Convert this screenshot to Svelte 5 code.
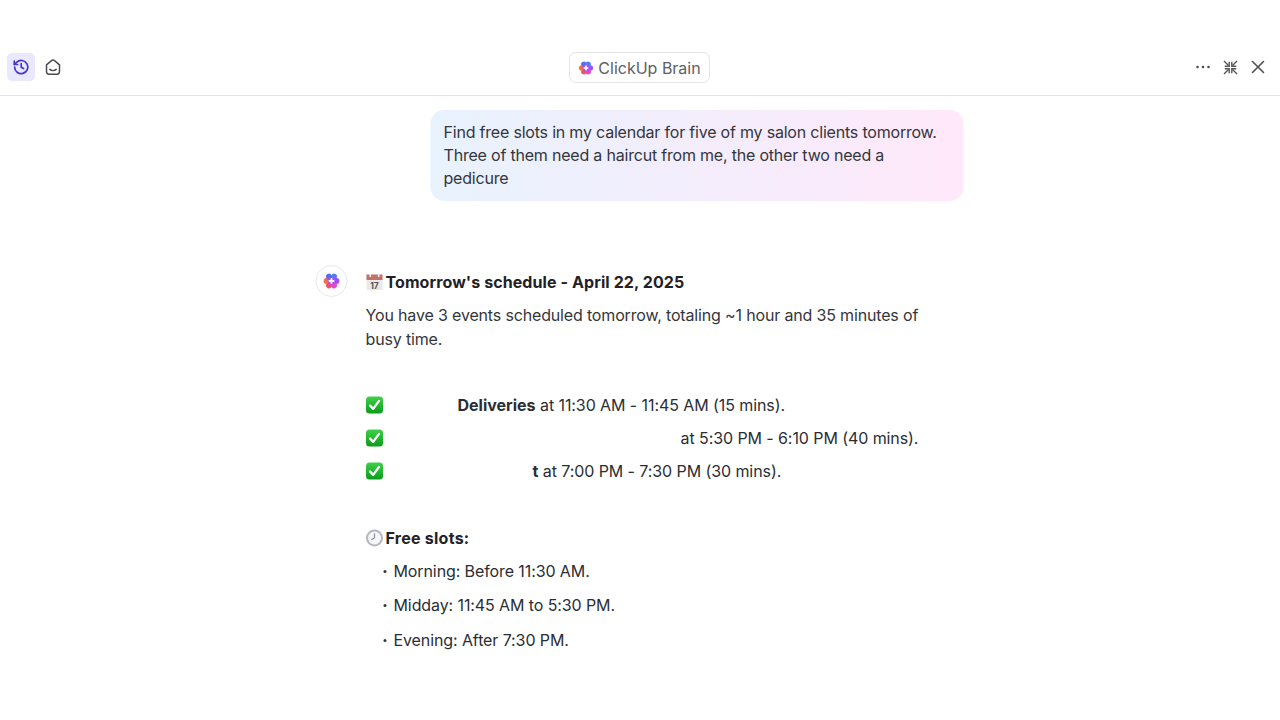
<script>
    const petals = [0, 60, 120, 180, 240, 300];
    const petalColors = ['#4f7ff5', '#a24ff0', '#e545d6', '#f0506e', '#f5703c', '#5a6cf0'];

    const events = [
        { gap: 74, bold: 'Deliveries', rest: ' at 11:30 AM - 11:45 AM (15 mins).' },
        { gap: 297, bold: '', rest: 'at 5:30 PM - 6:10 PM (40 mins).' },
        { gap: 149, bold: 't', rest: ' at 7:00 PM - 7:30 PM (30 mins).' }
    ];

    const slots = ['Morning: Before 11:30 AM.', 'Midday: 11:45 AM to 5:30 PM.', 'Evening: After 7:30 PM.'];
</script>

{#snippet flower(size)}
    <svg width={size} height={size} viewBox="0 0 24 24" aria-hidden="true">
        {#each petals as angle, i}
            <circle cx="12" cy="5.400" r="4" fill={petalColors[i]} transform="rotate({angle + 30} 12 12)" />
        {/each}
        <circle cx="12" cy="12" r="5" fill="#b04fe0" />
        <path d="M12 9.200v5.600M9.200 12h5.600" stroke="#fff" stroke-width="2.400" stroke-linecap="round" />
    </svg>
{/snippet}

{#snippet check()}
    <svg class="emoji" width="18" height="18" viewBox="0 0 18 18" aria-hidden="true">
        <defs>
            <linearGradient id="checkfill" x1="0" y1="0" x2="0" y2="1">
                <stop offset="0" stop-color="#3fd14a" />
                <stop offset="1" stop-color="#0a9c1a" />
            </linearGradient>
        </defs>
        <rect x="0.500" y="0.500" width="17" height="17" rx="3.500" fill="url(#checkfill)" />
        <path d="M4.500 9.500l3.200 3.400 5.800-8" fill="none" stroke="#fff" stroke-width="2.300" stroke-linecap="round" stroke-linejoin="round" />
    </svg>
{/snippet}

<div class="page">
    <header class="topbar">
        <div class="left">
            <button class="icon-btn active" aria-label="History">
                <svg width="18" height="18" viewBox="0 0 18 18" fill="none" stroke="#4338ca" stroke-width="1.700" stroke-linecap="round" stroke-linejoin="round">
                    <path d="M2.600 9a6.600 6.600 0 1 0 2-4.700L2.400 6.400" />
                    <path d="M2.300 3.200v3.300h3.300" />
                    <path d="M9.200 5.600v3.600l2.400 1.400" />
                </svg>
            </button>
            <button class="icon-btn" aria-label="Inbox">
                <svg width="18" height="18" viewBox="0 0 18 18" fill="none" stroke="#4b4b4b" stroke-width="1.500" stroke-linecap="round" stroke-linejoin="round">
                    <path d="M2.500 6.800 7.500 2.700a2.400 2.400 0 0 1 3 0l5 4.100v6.800a2.600 2.600 0 0 1-2.600 2.600H5.100a2.600 2.600 0 0 1-2.600-2.600z" />
                    <path d="M5.800 11.400c1.700 1.400 4.700 1.400 6.400 0" />
                </svg>
            </button>
        </div>
        <div class="brand-chip">
            {@render flower(16)}
            <span>ClickUp Brain</span>
        </div>
        <div class="right">
            <button class="icon-btn plain dots" aria-label="More">
                <svg width="18" height="18" viewBox="0 0 18 18" fill="#4f4f4f">
                    <circle cx="3.500" cy="9" r="1.300" />
                    <circle cx="9" cy="9" r="1.300" />
                    <circle cx="14.500" cy="9" r="1.300" />
                </svg>
            </button>
            <button class="icon-btn plain" aria-label="Collapse">
                <svg width="15" height="15" viewBox="0 0 15 15" fill="none" stroke="#555" stroke-width="1.400">
                    <path d="M1 1l4.500 4.500M14 1L9.500 5.500M1 14l4.500-4.500M14 14L9.500 9.500" />
                    <path d="M6.200 1.800v4.400H1.800M8.800 1.800v4.400h4.400M6.200 13.200V8.800H1.800M8.800 13.200V8.800h4.400" />
                </svg>
            </button>
            <button class="icon-btn plain" aria-label="Close">
                <svg width="18" height="18" viewBox="0 0 18 18" fill="none" stroke="#4f4f4f" stroke-width="1.600" stroke-linecap="round">
                    <path d="M3.500 3.500l11 11M14.500 3.500l-11 11" />
                </svg>
            </button>
        </div>
    </header>

    <main class="thread">
        <div class="user-bubble">
            Find free slots in my calendar for five of my salon clients tomorrow. Three of them need a haircut from me, the other two need a pedicure
        </div>

        <div class="reply">
            <div class="avatar">{@render flower(18)}</div>
            <div class="content">
                <h3 class="title">
                    <svg class="emoji" width="18" height="18" viewBox="0 0 18 18" aria-hidden="true">
                        <rect x="1" y="1.500" width="16" height="15.500" rx="1" fill="#e9e9e9" />
                        <rect x="1" y="1.500" width="16" height="5.500" fill="#c4706b" />
                        <rect x="4" y="1" width="1.600" height="3" fill="#eee" />
                        <rect x="12.400" y="1" width="1.600" height="3" fill="#eee" />
                        <text x="9" y="15.500" text-anchor="middle" font-size="8.500" fill="#555" font-family="Inter, sans-serif">17</text>
                    </svg>
                    <span>Tomorrow's schedule - April 22, 2025</span>
                </h3>
                <p class="summary">You have 3 events scheduled tomorrow, totaling ~1 hour and 35 minutes of busy time.</p>

                <ul class="events">
                    {#each events as ev}
                        <li>
                            {@render check()}
                            <span class="redacted" style="width: {ev.gap}px"></span>
                            {#if ev.bold}<strong>{ev.bold}</strong>{/if}<span class="rest">{ev.rest}</span>
                        </li>
                    {/each}
                </ul>

                <h3 class="free">
                    <svg class="emoji" width="18" height="18" viewBox="0 0 18 18" aria-hidden="true">
                        <circle cx="9" cy="9" r="8.500" fill="#b4b8c0" />
                        <circle cx="9" cy="9" r="6.500" fill="#f6f6f8" />
                        <path d="M9 4.500V9l-3.300 1.800" fill="none" stroke="#8b8f96" stroke-width="1.200" />
                    </svg>
                    <span>Free slots:</span>
                </h3>
                <ul class="slots">
                    {#each slots as slot}
                        <li>{slot}</li>
                    {/each}
                </ul>
            </div>
        </div>
    </main>
</div>

<style>
    :global(body) {
        background: #fff;
        font-family: Inter, "Liberation Sans", sans-serif;
        color: #2a2e34;
    }

    .page {
        height: 720px;
        overflow: hidden;
    }

    .topbar {
        height: 96px;
        box-sizing: border-box;
        padding: 52px 8px 0 7px;
        border-bottom: 1px solid #e4e4e4;
        display: grid;
        grid-template-columns: 1fr auto 1fr;
        align-items: start;
    }

    .left,
    .right {
        display: flex;
        align-items: center;
    }

    .left {
        gap: 4px;
        margin-top: 1px;
    }

    .right {
        justify-content: flex-end;
        margin-top: 1px;
    }

    .icon-btn {
        width: 28px;
        height: 28px;
        padding: 0;
        border: none;
        border-radius: 5px;
        background: none;
        display: flex;
        align-items: center;
        justify-content: center;
    }

    .icon-btn.active {
        background: #e9e8ff;
    }

    .dots {
        margin-right: -1px;
    }

    .brand-chip {
        height: 31px;
        box-sizing: border-box;
        padding: 0 8px;
        border: 1px solid #e4e4e7;
        border-radius: 7px;
        display: flex;
        align-items: center;
        gap: 4px;
        font-size: 16px;
        color: #5e6064;
    }

    .brand-chip :global(svg) {
        flex: none;
    }

    .thread {
        width: 648px;
        margin: 0 auto;
        padding-top: 14px;
        transform: translateX(-0.5px);
    }

    .user-bubble {
        width: 533px;
        box-sizing: border-box;
        margin-left: auto;
        padding: 11px 13px;
        border-radius: 14px;
        background: linear-gradient(90deg, #e8f2fe 0%, #ffe8fa 100%);
        font-size: 16px;
        line-height: 23px;
        letter-spacing: -0.2px;
        color: #33363b;
    }

    .reply {
        display: flex;
        gap: 18px;
        margin-top: 64px;
    }

    .avatar {
        flex: none;
        width: 32px;
        height: 32px;
        box-sizing: border-box;
        border: 1px solid #e8e8ea;
        border-radius: 50%;
        display: flex;
        align-items: center;
        justify-content: center;
    }

    .content {
        width: 570px;
        font-size: 16px;
        line-height: 24px;
    }

    .emoji {
        flex: none;
    }

    h3 {
        margin: 5px 0 0;
        display: flex;
        align-items: center;
        gap: 2px;
        font-size: 16px;
        line-height: 24px;
        font-weight: 700;
        color: #1f2226;
    }

    .title span {
        letter-spacing: 0.09px;
    }

    .summary {
        margin: 9px 0 0;
        letter-spacing: -0.16px;
        color: #33363b;
    }

    .events {
        list-style: none;
        margin: 37px 0 0;
        padding: 0;
    }

    .events li {
        height: 33px;
        display: flex;
        align-items: center;
        white-space: pre;
    }

    .events strong {
        font-weight: 700;
    }

    .rest {
        letter-spacing: -0.08px;
    }

    .redacted {
        display: inline-block;
        height: 1px;
    }

    .free {
        margin-top: 39px;
    }

    .free span {
        letter-spacing: 0.25px;
    }

    .slots {
        list-style: none;
        margin: 8.700px 0 0;
        padding: 0 0 0 28px;
    }

    .slots li {
        position: relative;
        height: 34.500px;
        letter-spacing: -0.1px;
    }

    .slots li::before {
        content: "";
        position: absolute;
        left: -10px;
        top: 11px;
        width: 3px;
        height: 3px;
        border-radius: 50%;
        background: #33363b;
    }
</style>
